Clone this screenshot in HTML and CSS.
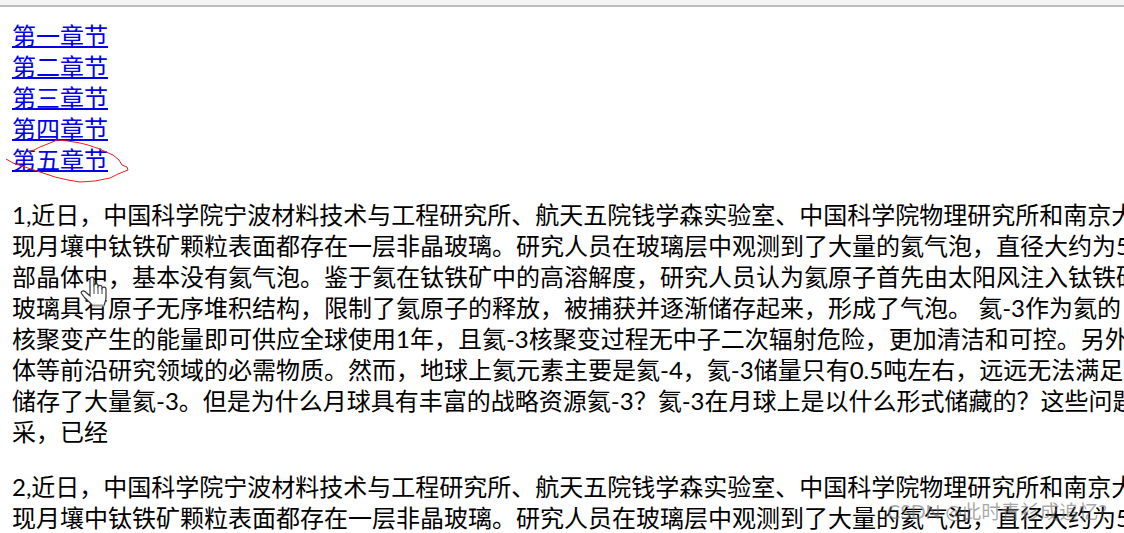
FILE: index.html
```html
<!DOCTYPE html>
<html lang="zh-CN">
<head>
    <meta charset="UTF-8">
    <title>第一章节</title>
    <link rel="stylesheet" href="styles.css">
</head>
<body>
    <div class="topbar"></div>

    <div class="content">
        <div class="chapters">
            <a href="#one">第一章节</a><br>
            <a href="#two">第二章节</a><br>
            <a href="#three">第三章节</a><br>
            <a href="#four">第四章节</a><br>
            <a href="#five">第五章节</a>
        </div>

        <p id="one">1,近日，中国科学院宁波材料技术与工程研究所、航天五院钱学森实验室、中国科学院物理研究所和南京大学<br>
        现月壤中钛铁矿颗粒表面都存在一层非晶玻璃。研究人员在玻璃层中观测到了大量的氦气泡，直径大约为5<br>
        部晶体中，基本没有氦气泡。鉴于氦在钛铁矿中的高溶解度，研究人员认为氦原子首先由太阳风注入钛铁矿<br>
        玻璃具有原子无序堆积结构，限制了氦原子的释放，被捕获并逐渐储存起来，形成了气泡。 氦-3作为氦的<br>
        核聚变产生的能量即可供应全球使用1年，且氦-3核聚变过程无中子二次辐射危险，更加清洁和可控。另外<br>
        体等前沿研究领域的必需物质。然而，地球上氦元素主要是氦-4，氦-3储量只有0.5吨左右，远远无法满足<br>
        储存了大量氦-3。但是为什么月球具有丰富的战略资源氦-3？氦-3在月球上是以什么形式储藏的？这些问题<br>
        采，已经</p>

        <p id="two">2,近日，中国科学院宁波材料技术与工程研究所、航天五院钱学森实验室、中国科学院物理研究所和南京大学<br>
        现月壤中钛铁矿颗粒表面都存在一层非晶玻璃。研究人员在玻璃层中观测到了大量的氦气泡，直径大约为5</p>
    </div>

    <!-- red pen circle around the last link -->
    <svg class="scribble" width="130" height="50" viewBox="0 135 130 50">
        <path d="M6 159 L13 163 L25 167 L40 172 L55 177 L68 180 L80 182 L95 181 L110 178 L118 174 L128 170 L127 167 L122 165 L119 160 L113 155 L104 151 L97 148 L88 145 L80 143 L68 141 L57 140 L50 143 L40 147 L34 150 L28 152" fill="none" stroke="#f01c1c" stroke-width="1"/>
    </svg>

    <!-- hand cursor -->
    <svg class="cursor" width="28" height="31" viewBox="0 0 28 31">
        <path d="M10 3 C10 0.500 14 0.500 14 3 L14 9 C15 7.500 18 7.500 18 9.500 L18 10.500 C19 8.800 22 9 22 11 L22 12 C23 10.500 26 11 26 13 L26 21 C26 25 24.500 27 24 29.500 L12.500 29.500 C11 27 7 24.500 4.500 21.500 L1.500 17.500 C0.500 15.500 3 14 5 15.500 L10 20 Z" fill="#fff" stroke="#333" stroke-width="1.200"/>
        <path d="M14 9 L14 18 M18 10.500 L18 18 M22 12 L22 18" fill="none" stroke="#444" stroke-width="1"/>
        <path d="M12.500 29.500 L24 29.500" fill="none" stroke="#999" stroke-width="2"/>
    </svg>

    <div class="watermark">CSDN @此时青衫成追忆?</div>
</body>
</html>
```

FILE: styles.css
```css
html, body {
    height: 100%;
}
body {
    margin: 0;
    background-color: #fff;
    font-family: Lato, "Noto Sans CJK SC", sans-serif;
    font-size: 24px;
    line-height: 31px;
    color: #000;
    overflow: hidden;
}
.topbar {
    height: 5px;
    background-color: #f4f4f4;
    border-bottom: 2px solid #bdbdbd;
}
.content {
    padding: 13px 0 0 12px;
    white-space: nowrap;
}
.chapters a {
    color: #0000ee;
    text-decoration-thickness: 2px;
}
p {
    margin: 24px 0 0;
}
.scribble {
    position: absolute;
    left: 0;
    top: 135px;
}
.cursor {
    position: absolute;
    left: 80px;
    top: 276px;
}
.watermark {
    position: absolute;
    right: 17px;
    top: 500px;
    font-size: 19.5px;
    line-height: 24px;
    white-space: nowrap;
    color: rgba(110, 110, 110, 0.6);
}
```
